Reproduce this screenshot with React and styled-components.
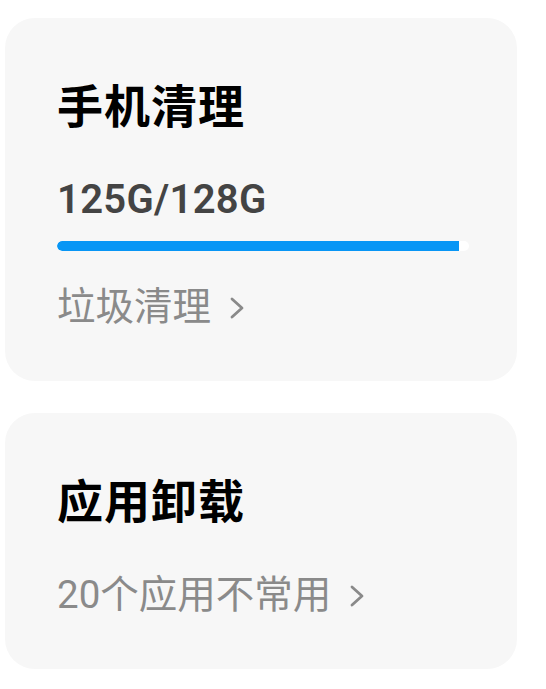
import React from "react";
import styled, { createGlobalStyle } from "styled-components";

const Global = createGlobalStyle`
  html, body { margin: 0; padding: 0; background: #ffffff; }
  body { font-family: "Noto Sans CJK SC", "Noto Sans", sans-serif; }
`;

const Page = styled.div`
  display: flex;
  flex-direction: column;
  gap: 32px;
  padding: 18px 29px 0 5px;
  width: 512px;
`;

const Card = styled.section`
  background: #f7f7f7;
  border-radius: 30px;
  padding: 55px 52px ${(p) => p.$pb}px 52px;
  display: flex;
  flex-direction: column;
  align-items: flex-start;
`;

const Title = styled.h2`
  margin: 0;
  font-family: "Noto Sans CJK SC", sans-serif;
  font-size: 46px;
  font-weight: 700;
  line-height: 60px;
  color: #000000;
  letter-spacing: 1px;
`;

const Usage = styled.div`
  margin-top: 42px;
  font-family: Roboto, "Noto Sans", sans-serif;
  font-size: 40px;
  font-weight: 600;
  line-height: 50px;
  color: #444444;
  letter-spacing: 0.3px;
`;

const Track = styled.div`
  margin-top: 16px;
  width: 412px;
  height: 10px;
  border-radius: 5px;
  background: #ffffff;
  overflow: hidden;
  display: flex;
`;

const Fill = styled.div`
  height: 100%;
  background: #0896f5;
  border-radius: 5px 0 0 5px;
`;

const Link = styled.div`
  margin-top: ${(p) => p.$mt}px;
  display: flex;
  align-items: center;
  gap: 19px;
  font-family: Roboto, "Noto Sans CJK SC", sans-serif;
  font-size: 38.5px;
  font-weight: 400;
  line-height: 50px;
  color: #8a8a8a;
`;

const Chevron = styled.svg`
  width: 14px;
  height: 22px;
  flex: none;
  margin-top: 2px;
`;

const Arrow = () => (
  <Chevron viewBox="0 0 14 22" fill="none">
    <path d="M2 2 L12 11 L2 20" stroke="#8a8a8a" strokeWidth="2.8" strokeLinecap="round" strokeLinejoin="round" />
  </Chevron>
);

export default function App() {
  const used = 125;
  const total = 128;
  return (
    <>
      <Global />
      <Page>
        <Card $pb={49}>
          <Title>手机清理</Title>
          <Usage>{used}G/{total}G</Usage>
          <Track>
            <Fill style={{ width: `${(used / total) * 100}%` }} />
          </Track>
          <Link $mt={31}>
            <span>垃圾清理</span>
            <Arrow />
          </Link>
        </Card>
        <Card $pb={49}>
          <Title>应用卸载</Title>
          <Link $mt={42}>
            <span>20个应用不常用</span>
            <Arrow />
          </Link>
        </Card>
      </Page>
    </>
  );
}
